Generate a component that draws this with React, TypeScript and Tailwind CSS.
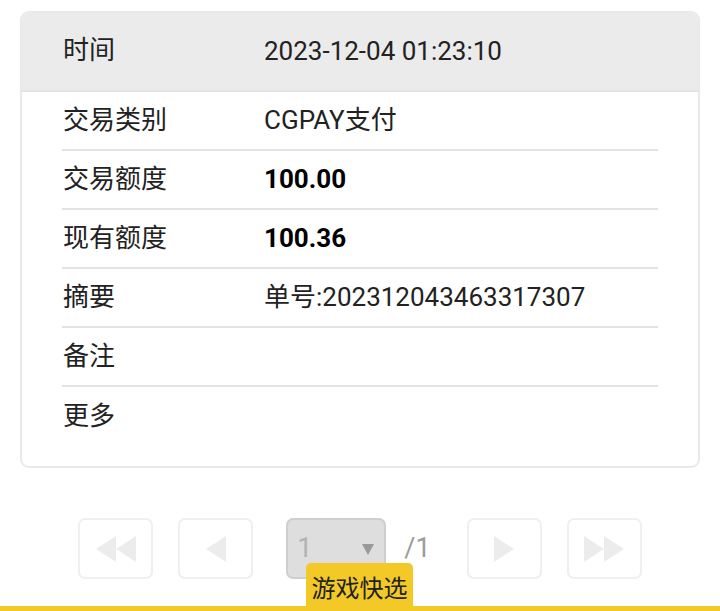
const rows = [
  { label: "交易类别", value: "CGPAY支付", bold: false },
  { label: "交易额度", value: "100.00", bold: true },
  { label: "现有额度", value: "100.36", bold: true },
  { label: "摘要", value: "单号:202312043463317307", bold: false },
  { label: "备注", value: "", bold: false },
  { label: "更多", value: "", bold: false },
];

const font = { fontFamily: 'Roboto, "Noto Sans CJK SC", sans-serif' };

const PageButton = ({ children }: { children: React.ReactNode }) => (
  <div className="w-[75px] h-[61px] rounded-[7px] border-2 border-[#efefef] bg-white flex items-center justify-center">
    {children}
  </div>
);

const Tri = ({ dir }: { dir: "left" | "right" }) => (
  <svg width="20" height="26" viewBox="0 0 20 26">
    {dir === "left" ? <polygon points="20,0 20,26 0,13" fill="#ececec" /> : <polygon points="0,0 0,26 20,13" fill="#ececec" />}
  </svg>
);

export default function App() {
  return (
    <div className="w-[720px] h-[611px] bg-white relative overflow-hidden text-[#222]" style={font}>
      <div className="pt-[11px] px-[20px]">
        <div className="rounded-[9px] border-2 border-[#e9e9e9] overflow-hidden pb-[20px]">
          <div className="h-[81px] -mt-[2px] bg-[#ebebeb] border-b-2 border-[#e3e3e3] flex items-center px-[40px] text-[26px]">
            <span className="w-[202px] pl-[1px]">时间</span>
            <span className="mt-[2px]">2023-12-04 01:23:10</span>
          </div>
          <div className="px-[40px]">
            {rows.map((r, i) => (
              <div
                key={r.label}
                className={`h-[59px] flex items-center text-[26px] ${i < rows.length - 1 ? "border-b-2 border-[#e3e3e3]" : ""}`}
              >
                <span className="w-[202px] pl-[1px]">{r.label}</span>
                <span className={r.bold ? "font-bold text-black" : ""}>{r.value}</span>
              </div>
            ))}
          </div>
        </div>
      </div>

      <div className="mt-[50px] flex items-center justify-center">
        <PageButton>
          <div className="flex">
            <Tri dir="left" />
            <Tri dir="left" />
          </div>
        </PageButton>
        <div className="ml-[25px]">
          <PageButton>
            <Tri dir="left" />
          </PageButton>
        </div>
        <div className="ml-[33px] w-[100px] h-[61px] rounded-[7px] border-2 border-[#cfcfcf] bg-[#dedede] flex items-center justify-between pl-[9px] pr-[10px]">
          <span className="text-[27px] text-[#b3b3b3]">1</span>
          <svg width="12" height="11" viewBox="0 0 12 11" className="mt-[2px]">
            <polygon points="0,0 12,0 6,11" fill="#999" />
          </svg>
        </div>
        <span className="ml-[18px] text-[27px] text-[#9c9c9c]">/1</span>
        <div className="ml-[36px]">
          <PageButton>
            <Tri dir="right" />
          </PageButton>
        </div>
        <div className="ml-[25px]">
          <PageButton>
            <div className="flex">
              <Tri dir="right" />
              <Tri dir="right" />
            </div>
          </PageButton>
        </div>
      </div>

      <div className="absolute left-0 right-0 bottom-0 h-[5px] bg-[#f3c927]" />
      <div
        className="absolute left-[306px] bottom-0 w-[107px] h-[48px] rounded-t-[5px] bg-[#f3c927] flex items-center justify-center text-[24px] text-[#222]"
        style={{ fontFamily: '"Noto Sans CJK SC", sans-serif' }}
      >
        游戏快选
      </div>
    </div>
  );
}
